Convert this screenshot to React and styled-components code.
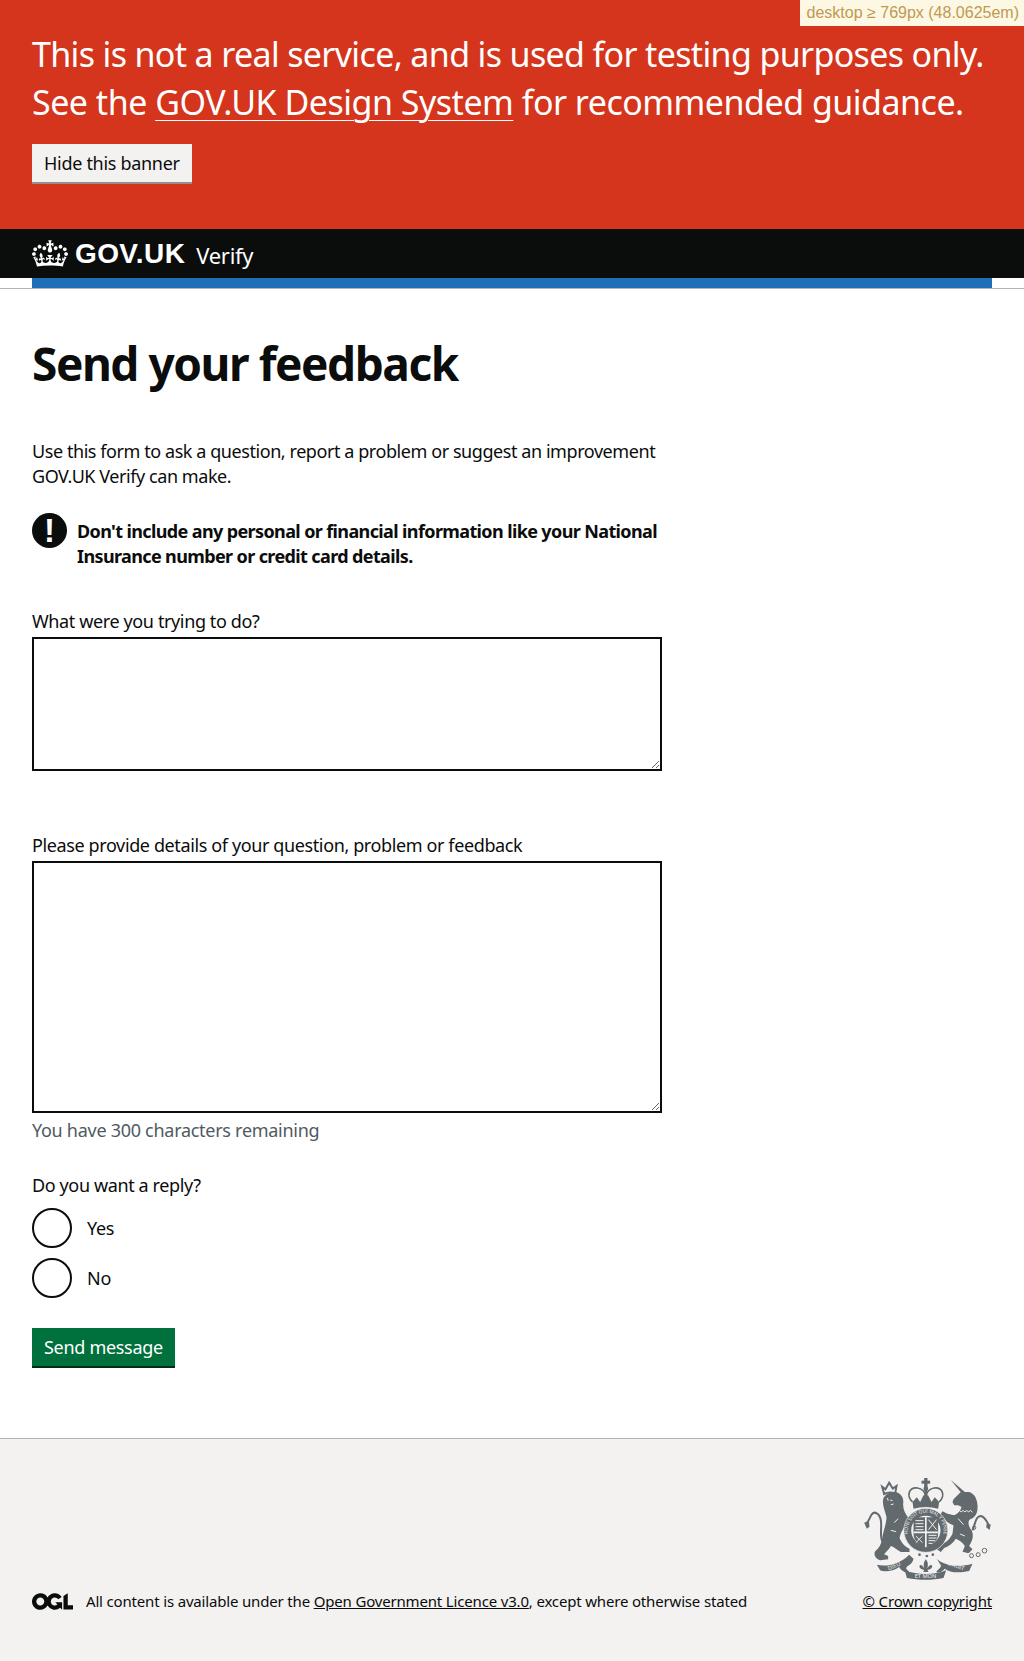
import React from "react";
import styled, { createGlobalStyle } from "styled-components";

const GlobalStyle = createGlobalStyle`
  html, body {
    margin: 0;
    padding: 0;
    background: #ffffff;
    color: #0b0c0c;
    font-family: "Noto Sans", Arial, sans-serif;
  }
`;

const Page = styled.div`
  position: relative;
  width: 1024px;
`;

const Breakpoint = styled.div`
  position: absolute;
  top: 0;
  right: 0;
  padding: 3px 5px 0 7px;
  height: 23px;
  background: #fcf8e3;
  color: #c09853;
  font: 16px/20px "Liberation Sans", Arial, sans-serif;
`;

const Banner = styled.div`
  background: #d4351c;
  color: #ffffff;
  padding: 30px 32px 44px;
  height: 155px;
`;

const BannerText = styled.p`
  margin: 0 0 18px;
  font-size: 34px;
  line-height: 48px;
  letter-spacing: -0.65px;
  white-space: nowrap;
  a {
    color: inherit;
    text-decoration-thickness: 1px;
    text-underline-offset: 5px;
  }
`;

const BannerGuidance = styled.span`
  letter-spacing: -0.5px;
`;

const Button = styled.button`
  display: block;
  border: 0;
  margin: 0;
  padding: 0 12px;
  height: 38px;
  font-family: inherit;
  font-size: 18px;
  letter-spacing: -0.3px;
  background: ${props => (props.$primary ? "#00703c" : "#f3f2f1")};
  color: ${props => (props.$primary ? "#ffffff" : "#0b0c0c")};
  box-shadow: 0 2px 0 ${props => (props.$primary ? "#002d18" : "#929191")};
`;

const Header = styled.header`
  display: flex;
  align-items: center;
  height: 49px;
  padding: 0 32px;
  background: #0b0c0c;
  color: #ffffff;
`;

const Crown = styled.svg`
  width: 36px;
  height: 27px;
  margin-right: 7px;
  fill: currentColor;
`;

const LogoText = styled.span`
  font-family: "Liberation Sans", Arial, sans-serif;
  font-weight: 700;
  font-size: 28px;
  letter-spacing: 0.4px;
`;

const ServiceName = styled.span`
  font-size: 22px;
  margin-left: 11px;
  padding-top: 3px;
  letter-spacing: -0.3px;
`;

const BarRow = styled.div`
  padding: 0 32px;
  border-bottom: 1px solid #b1b4b6;
`;

const BlueBar = styled.div`
  height: 10px;
  background: #1d70b8;
`;

const Main = styled.main`
  padding: 39px 32px 72px;
`;

const Title = styled.h1`
  margin: 0 0 41px;
  font-size: 46px;
  line-height: 70px;
  font-weight: 700;
  letter-spacing: -1.45px;
`;

const Column = styled.div`
  width: 630px;
`;

const Body = styled.p`
  margin: 0;
  font-size: 18px;
  line-height: 25px;
  letter-spacing: -0.43px;
  white-space: nowrap;
`;

const Warning = styled.div`
  display: flex;
  gap: 10px;
  margin-top: 24px;
  margin-bottom: 39px;
`;

const WarningIcon = styled.div`
  flex: none;
  width: 35px;
  height: 35px;
  border-radius: 50%;
  background: #0b0c0c;
  color: #ffffff;
  font: 700 33px/35px "Liberation Sans", Arial, sans-serif;
  text-align: center;
`;

const WarningText = styled.strong`
  padding-top: 6px;
  font-size: 18px;
  line-height: 25px;
  letter-spacing: -0.62px;
  white-space: nowrap;
`;

const Field = styled.div`
  margin-bottom: ${props => props.$gap}px;
`;

const Label = styled.label`
  display: block;
  padding-top: 1px;
  font-size: 18px;
  line-height: 25px;
  letter-spacing: -0.38px;
  margin-bottom: 3px;
`;

const TextArea = styled.textarea`
  display: block;
  box-sizing: border-box;
  width: 630px;
  height: ${props => props.$height}px;
  border: 2px solid #0b0c0c;
  border-radius: 0;
  outline: 0;
  margin: 0;
  padding: 5px;
`;

const Hint = styled.div`
  font-size: 18px;
  line-height: 25px;
  letter-spacing: -0.28px;
  color: #505a5f;
  margin-top: 5px;
`;

const Radios = styled.div`
  display: flex;
  flex-direction: column;
  gap: 10px;
  margin-top: 10px;
  margin-bottom: 30px;
`;

const RadioRow = styled.div`
  display: flex;
  align-items: center;
  gap: 15px;
  height: 40px;
  font-size: 18px;
  letter-spacing: -0.3px;
`;

const RadioCircle = styled.span`
  box-sizing: border-box;
  width: 40px;
  height: 40px;
  border: 2px solid #0b0c0c;
  border-radius: 50%;
  background: #ffffff;
`;

const Footer = styled.footer`
  box-sizing: border-box;
  display: flex;
  justify-content: space-between;
  align-items: flex-end;
  height: 223px;
  padding: 0 32px 47px;
  background: #f3f2f1;
  border-top: 1px solid #b1b4b6;
  font-size: 15px;
  letter-spacing: -0.17px;
  a {
    color: inherit;
  }
`;

const Licence = styled.div`
  display: flex;
  align-items: center;
  gap: 13px;
  line-height: 25px;
`;

const OglLogo = styled.svg`
  width: 41px;
  height: 17px;
  fill: #0b0c0c;
`;

const Copyright = styled.div`
  display: flex;
  flex-direction: column;
  align-items: center;
  line-height: 25px;
`;

const Crest = styled.svg`
  width: 127px;
  height: 104px;
  margin-bottom: 8px;
  fill: #626a6e;
`;

const ArmsLine = styled.path`
  fill: none;
  stroke: ${props => (props.$light ? "#f3f2f1" : "#626a6e")};
  stroke-width: ${props => props.$width || 5};
`;

const ArmsText = styled.text`
  fill: #f3f2f1;
  font-family: "Noto Sans", Arial, sans-serif;
  font-size: ${props => props.$size || 17}px;
  letter-spacing: 0;
  text-anchor: middle;
`;

const ChainLink = styled.circle`
  fill: none;
  stroke: #626a6e;
  stroke-width: 3;
`;

const crownPath = "M25 30.2c3.5 1.5 7.7-.2 9.1-3.7 1.5-3.6-.2-7.8-3.9-9.2-3.6-1.4-7.6.3-9.1 3.9-1.4 3.5.3 7.5 3.9 9zM9 39.5c3.6 1.5 7.8-.2 9.2-3.7 1.5-3.6-.2-7.8-3.9-9.1-3.6-1.5-7.6.2-9.1 3.8-1.4 3.5.3 7.5 3.8 9zM4.4 57.2c3.5 1.5 7.7-.2 9.1-3.8 1.5-3.6-.2-7.7-3.9-9.1-3.5-1.5-7.6.3-9.1 3.8-1.4 3.5.3 7.6 3.9 9.1zm38.3-21.4c3.5 1.5 7.7-.2 9.1-3.8 1.5-3.6-.2-7.7-3.9-9.1-3.6-1.5-7.6.3-9.1 3.8-1.3 3.6.4 7.7 3.9 9.1zm64.4-5.6c-3.6 1.5-7.8-.2-9.1-3.7-1.5-3.6.2-7.8 3.8-9.2 3.6-1.4 7.7.3 9.2 3.9 1.3 3.5-.4 7.5-3.9 9zm15.9 9.3c-3.6 1.5-7.7-.2-9.1-3.7-1.5-3.6.2-7.8 3.7-9.1 3.6-1.5 7.7.2 9.2 3.8 1.5 3.5-.3 7.5-3.8 9zm4.7 17.7c-3.6 1.5-7.8-.2-9.2-3.8-1.5-3.6.2-7.7 3.9-9.1 3.6-1.5 7.7.3 9.2 3.8 1.3 3.5-.4 7.6-3.9 9.1zM89.3 35.8c-3.6 1.5-7.8-.2-9.2-3.8-1.4-3.6.2-7.7 3.9-9.1 3.6-1.5 7.7.3 9.2 3.8 1.4 3.6-.3 7.7-3.9 9.1zM69.7 17.7l8.9 4.7V9.3l-8.9 2.8c-.2-.3-.5-.6-.9-.9L72.4 0H59.6l3.5 11.2c-.3.3-.6.5-.9.9l-8.8-2.8v13.1l8.8-4.7c.3.3.6.7.9.9l-5 15.4v.1c-.2.8-.4 1.6-.4 2.4 0 4.1 3.1 7.5 7 8.1h.2c.3 0 .7.1 1 .1.4 0 .7 0 1-.1h.2c4-.6 7.1-4.1 7.1-8.1 0-.8-.1-1.7-.4-2.4V34l-5.1-15.4c.4-.2.7-.6 1-.9zM66 92.8c16.9 0 32.8 1.1 47.1 3.2 4-16.9 8.9-26.7 14-33.5l-9.6-3.4c1 4.9 1.1 7.2 0 10.2-1.5-1.4-3-4.3-4.2-8.7L108.6 76c2.8-2 5-3.2 7.5-3.3-4.4 9.4-10 11.9-13.6 11.2-4.3-.8-6.3-4.6-5.6-7.9 1-4.7 5.7-5.9 8-.5 4.3-8.7-3-11.4-7.6-8.8 7.1-7.2 7.9-13.5 2.1-21.1-8 6.1-8.1 12.3-4.5 20.8-4.7-5.4-12.1-2.5-9.5 6.2 3.4-5.2 7.9-2 7.2 3.1-.6 4.3-6.4 7.8-13.5 7.2-10.3-.9-10.9-8-11.2-13.8 2.5-.5 7.1 1.8 11 7.3L80.2 60c-4.1 4.4-8 5.3-12.3 5.4 1.4-4.4 8-11.6 8-11.6H55.5s6.4 7.2 7.9 11.6c-4.2-.1-8-1-12.3-5.4l1.4 16.4c3.9-5.5 8.5-7.7 10.9-7.3-.3 5.8-.9 12.8-11.1 13.8-7.2.6-12.9-2.9-13.5-7.2-.7-5 3.8-8.3 7.1-3.1 2.7-8.7-4.6-11.6-9.4-6.2 3.7-8.5 3.6-14.7-4.6-20.8-5.8 7.6-5 13.9 2.2 21.1-4.7-2.6-11.9.1-7.7 8.8 2.3-5.5 7.1-4.2 8.1.5.7 3.3-1.3 7.1-5.7 7.9-3.5.7-9-1.8-13.5-11.2 2.5.1 4.7 1.3 7.5 3.3l-4.7-15.4c-1.2 4.4-2.7 7.2-4.3 8.7-1.1-3-.9-5.3 0-10.2l-9.5 3.4c5 6.9 9.9 16.7 14 33.5 14.8-2.1 30.8-3.2 47.7-3.2z";

const oglPath = "M421.5 142.8V.1l-50.7 32.3v161.1h112.4v-50.7zm-122.3-9.6A47.12 47.12 0 0 1 221 97.8c0-26 21.1-47.1 47.1-47.1 16.7 0 31.4 8.7 39.7 21.8l42.7-27.2A97.63 97.63 0 0 0 268.1 0c-36.5 0-68.3 20.1-85.1 49.7A98 98 0 0 0 97.8 0C43.9 0 0 43.9 0 97.8s43.9 97.8 97.8 97.8c36.5 0 68.3-20.1 85.1-49.7a97.76 97.76 0 0 0 149.6 25.4l19.4 22.2h3v-87.8h-80l24.3 27.5zM97.8 145c-26 0-47.1-21.1-47.1-47.1s21.1-47.1 47.1-47.1 47.2 21 47.2 47S123.8 145 97.8 145";

// royal arms traced by eye, viewBox units are 1/3 of a page pixel
function RoyalArms() {
  return (
    <Crest viewBox="70 55 380 312" role="img" aria-label="Royal coat of arms">
      {/* lion */}
      <path d="M128 118C135 105 150 98 165 100C180 104 190 118 187 135C186 150 192 165 205 180L214 192L205 205L190 205C185 215 178 225 176 238C185 258 195 265 206 270L206 280L180 280C170 275 160 265 150 262C145 272 135 280 130 287L142 292L142 302L118 305C105 300 97 290 103 278C115 268 122 255 124 240C126 220 137 195 137 175C132 155 122 135 128 118Z" />
      <ArmsLine d="M126 250C115 240 124 205 120 185C117 165 100 155 92 168C87 178 82 188 77 197" $width={6} />
      <path d="M70 192L84 186L86 204L78 210Z" />
      <ArmsLine d="M124 84L134 92L145 72L156 90L167 82L163 104Q145 98 130 106Z" $width={6} />
      <ArmsLine d="M148 124l7 2M158 136l-8 2M140 118l2 8M172 180l-12 12M150 215l16 4" $light $width={3} />
      {/* unicorn */}
      <path d="M330 64L372 100L366 108Z" />
      <path d="M338 122L360 100L385 100C402 105 412 125 410 150C410 165 400 178 388 182C378 190 385 205 392 215C400 232 395 245 385 262L395 272L385 282L365 280L372 262C365 250 355 245 345 240C335 255 325 262 310 268L300 280L288 272L300 258C315 252 328 240 335 225L338 200C325 195 315 188 305 175L298 168L305 158L320 165L340 170C352 165 360 155 362 145L352 140L340 140L335 130Z" />
      <ArmsLine d="M350 160l6-5 5 5 6-5 5 5 6-5 5 5 6-5 5 6M352 180l16 18M358 226l14 6" $light $width={3} />
      <ArmsLine d="M395 215C405 190 405 172 420 172C432 174 438 188 444 200" $width={6} />
      <path d="M438 194L450 198L446 214L436 206Z" />
      <ChainLink cx="380" cy="276" r="6" />
      <ChainLink cx="392" cy="291" r="6" />
      <ChainLink cx="412" cy="288" r="6" />
      <ChainLink cx="431" cy="276" r="7" />
      <ChainLink cx="400" cy="207" r="5" />
      {/* crown */}
      <rect x="250" y="58" width="10" height="34" />
      <rect x="242" y="66" width="26" height="9" />
      <circle cx="255" cy="90" r="7" />
      <ArmsLine d="M215 130C195 110 205 85 230 88C245 90 252 100 255 112C258 100 265 90 280 88C305 85 315 110 295 130" />
      <rect x="251" y="90" width="8" height="40" />
      <path d="M215 130L228 116L238 130L248 110L262 110L272 130L282 116L295 130L292 150Q255 140 218 150Z" />
      {/* shield and garter */}
      <circle cx="255" cy="215" r="66" stroke="#f3f2f1" strokeWidth="2" />
      <circle cx="255" cy="215" r="44" fill="#f3f2f1" />
      <path d="M218 176H292V225C292 248 270 261 255 266C240 261 218 248 218 225Z" />
      <ArmsLine d="M255 176V266M218 221H292" $light $width={5} />
      <ArmsLine d="M224 186h24M224 195h24M224 204h24M224 213h24M263 183l24 30M287 183l-24 30M225 232l20 20M245 232l-20 20M263 230h24M263 238h24M263 246h20M263 254h12" $light $width={3} />
      <path id="garter-arc" d="M217 254A54 54 0 1 1 293 254" fill="none" />
      <ArmsText $size={14}>
        <textPath href="#garter-arc" startOffset="50%">HONI SOIT QUI MAL Y PENSE</textPath>
      </ArmsText>
      {/* motto ribbons */}
      <path d="M108 318C135 325 175 318 205 288L218 300C214 322 196 318 196 330L210 345C195 345 180 335 175 325C155 340 130 340 118 335Z" />
      <path d="M192 335C230 350 280 350 316 335L308 358C275 365 235 365 198 358Z" />
      <path d="M288 300C300 315 345 330 395 315L385 337C350 345 325 340 312 330C304 338 296 345 286 340C292 330 308 326 296 314Z" />
      <ArmsText x="162" y="327" transform="rotate(-24 162 327)">DIEU</ArmsText>
      <ArmsText x="254" y="359">ET MON</ArmsText>
      <ArmsText x="344" y="327" transform="rotate(20 344 327)">DROIT</ArmsText>
      <path d="M255 302C263 312 262 322 259 330C262 322 272 314 274 322C275 330 266 332 260 334L263 340H247L250 334C244 332 235 330 236 322C238 314 248 322 251 330C248 322 247 312 255 302Z" />
      <circle cx="236" cy="288" r="4" />
      <circle cx="258" cy="292" r="4" />
      <circle cx="276" cy="288" r="4" />
    </Crest>
  );
}

export default function App() {
  return (
    <Page>
      <GlobalStyle />
      <Breakpoint>desktop ≥ 769px (48.0625em)</Breakpoint>
      <Banner>
        <BannerText>
          This is not a real service, and is used for testing purposes only.
          <br />
          <BannerGuidance>
            See the <a href="#design">GOV.UK Design System</a> for recommended guidance.
          </BannerGuidance>
        </BannerText>
        <Button>Hide this banner</Button>
      </Banner>
      <Header>
        <Crown viewBox="0 0 132 97"><path d={crownPath} /></Crown>
        <LogoText>GOV.UK</LogoText>
        <ServiceName>Verify</ServiceName>
      </Header>
      <BarRow><BlueBar /></BarRow>
      <Main>
        <Title>Send your feedback</Title>
        <Column>
          <Body>
            Use this form to ask a question, report a problem or suggest an improvement
            <br />
            GOV.UK Verify can make.
          </Body>
          <Warning>
            <WarningIcon>!</WarningIcon>
            <WarningText>
              Don't include any personal or financial information like your National
              <br />
              Insurance number or credit card details.
            </WarningText>
          </Warning>
          <Field $gap={61}>
            <Label>What were you trying to do?</Label>
            <TextArea $height={134} />
          </Field>
          <Field $gap={29}>
            <Label>Please provide details of your question, problem or feedback</Label>
            <TextArea $height={252} />
            <Hint>You have 300 characters remaining</Hint>
          </Field>
          <Label>Do you want a reply?</Label>
          <Radios>
            <RadioRow><RadioCircle />Yes</RadioRow>
            <RadioRow><RadioCircle />No</RadioRow>
          </Radios>
          <Button $primary>Send message</Button>
        </Column>
      </Main>
      <Footer>
        <Licence>
          <OglLogo viewBox="0 0 483.2 195.7"><path d={oglPath} /></OglLogo>
          <span>
            All content is available under the <a href="#ogl">Open Government Licence v3.0</a>, except where otherwise stated
          </span>
        </Licence>
        <Copyright>
          <RoyalArms />
          <a href="#crown">© Crown copyright</a>
        </Copyright>
      </Footer>
    </Page>
  );
}
